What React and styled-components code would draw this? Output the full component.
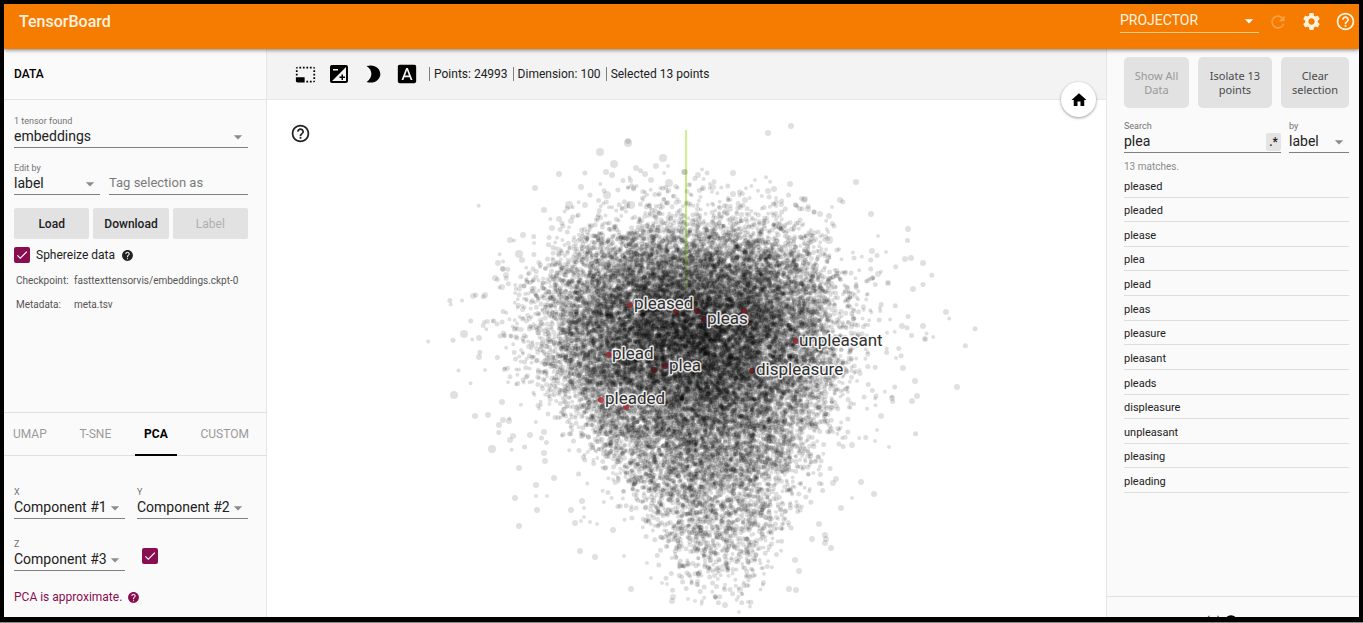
import React, { useId } from "react";
import styled, { createGlobalStyle, css } from "styled-components";
import {
  MdArrowDropDown,
  MdCheck,
  MdExposure,
  MdFontDownload,
  MdHelp,
  MdHelpOutline,
  MdHome,
  MdPhotoSizeSelectSmall,
  MdRefresh,
  MdSettings,
} from "react-icons/md";

const GlobalStyle = createGlobalStyle`
  *, *::before, *::after { box-sizing: border-box; }
  body {
    margin: 0;
    background: #8a8a8a;
    font-family: Roboto, "Liberation Sans", sans-serif;
    color: #212121;
  }
  button, input, select { font: inherit; color: inherit; margin: 0; }
  button { cursor: pointer; }
`;

const Frame = styled.div`
  display: flex;
  flex-direction: column;
  height: calc(100vh - 1px);
  border: 4px solid #000;
  border-bottom-width: 5px;
  overflow: hidden;
  background: #fff;
`;

/* ---------- header ---------- */

const Header = styled.header`
  display: flex;
  align-items: center;
  flex: none;
  height: 45px;
  padding: 0 3px 10px 15px;
  background: #f57c00;
  color: #fff3e0;
  box-shadow: 0 1px 4px rgba(0, 0, 0, 0.5);
  z-index: 2;
`;

const Brand = styled.h1`
  flex: 1;
  margin: 0;
  font-size: 16px;
  line-height: 20px;
  font-weight: 500;
`;

const HeaderActions = styled.div`
  display: flex;
  align-items: center;
  gap: 13px;
  margin-left: 9px;
`;

const IconButton = styled.button`
  display: flex;
  align-items: center;
  justify-content: center;
  padding: 0;
  border: 0;
  background: none;
  font-size: ${(p) => p.$size || 24}px;
  opacity: ${(p) => (p.disabled ? 0.3 : 1)};
`;

/* ---------- form parts ---------- */

const Field = styled.div`
  display: flex;
  flex-direction: column;
  justify-content: flex-end;
  min-width: 0;
  flex: ${(p) => (p.$width ? `0 0 ${p.$width}px` : "1 1 0")};
`;

const FieldLabel = styled.label`
  font-size: 9px;
  line-height: 12px;
  color: #737373;
`;

const Control = styled.div`
  display: grid;
  grid-template-columns: 1fr auto;
  align-items: center;
  height: ${(p) => (p.$header ? 22 : 21)}px;
  border-bottom: 1px solid ${(p) => (p.$header ? "#fbc890" : "#808080")};
`;

const controlText = css`
  width: 100%;
  min-width: 0;
  padding: 0 0 2px;
  border: 0;
  outline: 0;
  background: none;
  line-height: 18px;
`;

const Select = styled.select`
  ${controlText}
  grid-area: 1 / 1 / 2 / 3;
  appearance: none;
  font-size: 14px;
`;

const Arrow = styled(MdArrowDropDown)`
  grid-area: 1 / 2;
  pointer-events: none;
  font-size: 20px;
  color: ${(p) => p.color || "#8c8c8c"};
`;

const TextInput = styled.input`
  ${controlText}
  font-size: ${(p) => p.$size || 14}px;
  &::placeholder { color: #7a7a7a; opacity: 1; }
`;

const TickArea = styled.span`
  display: inline-grid;
  place-items: center;
  width: 16px;
  height: 16px;
  color: #fff;
  font-size: 14px;
  > * { grid-area: 1 / 1; }
  svg { pointer-events: none; }
`;

const Tick = styled.input`
  appearance: none;
  width: 16px;
  height: 16px;
  border-radius: 2px;
  background: #880e4f;
`;

function SelectField({ label, value, width }) {
  const id = useId();
  return (
    <Field $width={width}>
      <FieldLabel htmlFor={id}>{label}</FieldLabel>
      <Control>
        <Select id={id} defaultValue={value}>
          <option>{value}</option>
        </Select>
        <Arrow />
      </Control>
    </Field>
  );
}

function CheckBox(props) {
  return (
    <TickArea>
      <Tick type="checkbox" defaultChecked {...props} />
      <MdCheck />
    </TickArea>
  );
}

function MoonIcon() {
  return (
    <svg width="1em" height="1em" viewBox="0 0 24 24" fill="currentColor" aria-hidden="true">
      <path d="M5 3.4C13 .6 20 5.6 20 12S13 23.4 5 20.6C12 16.4 12 7.6 5 3.4Z" />
    </svg>
  );
}

/* ---------- panels ---------- */

const Body = styled.div`
  display: flex;
  flex: 1;
  min-height: 0;
`;

const SidePanel = styled.aside`
  display: flex;
  flex-direction: column;
  flex: 0 0 ${(p) => p.$width}px;
  background: #fafafa;
  border: 0 solid #e6e6e6;
  border-${(p) => p.$edge}-width: 1px;
`;

const PanelTitle = styled.h2`
  flex: none;
  margin: 0;
  padding: 15px 10px;
  border-bottom: 1px solid #e4e4e4;
  font-size: 12px;
  line-height: 20px;
  font-weight: 500;
  color: #000;
`;

const DataSection = styled.section`
  flex: 1;
  padding: 15px 18px 0 10px;
`;

const FieldRow = styled.div`
  display: flex;
  align-items: flex-end;
  gap: ${(p) => p.$gap}px;
  margin-top: ${(p) => p.$top || 0}px;
`;

const ButtonRow = styled.div`
  display: flex;
  gap: 4px;
  margin-top: 13px;
`;

const GreyButton = styled.button`
  flex: 1 1 0;
  height: 31px;
  padding: 0;
  border: 0;
  border-radius: 2px;
  background: #e2e2e2;
  font-size: 12px;
  font-weight: ${(p) => (p.disabled ? 400 : 500)};
  color: ${(p) => (p.disabled ? "#b0b0b0" : "#212121")};
`;

const CheckLine = styled.div`
  display: flex;
  align-items: center;
  gap: 6px;
  height: 16px;
  margin-top: 8px;
  font-size: 12px;
  label { display: flex; align-items: center; gap: 6px; }
`;

const MetaList = styled.dl`
  display: grid;
  grid-template-columns: 58px 1fr;
  row-gap: 8px;
  margin: 10px 0 0;
  padding-left: 2px;
  font-size: 10px;
  line-height: 16px;
  color: #555;
  white-space: nowrap;
  dd { margin: 0; }
`;

const TabBar = styled.div`
  display: flex;
  justify-content: space-between;
  height: 44px;
  padding-right: 8px;
  border: 1px solid #e0e0e0;
  border-width: 1px 0;
`;

const Tab = styled.button`
  height: 43px;
  padding: 0 9px;
  border: 0;
  border-bottom: 2px solid ${(p) => (p.$active ? "#000" : "transparent")};
  background: none;
  font-size: 12px;
  font-weight: ${(p) => (p.$active ? 700 : 400)};
  color: ${(p) => (p.$active ? "#000" : "#9a9a9a")};
`;

const ComponentSection = styled.div`
  padding: 30px 18px 10px 10px;
`;

const TickSlot = styled.div`
  display: flex;
  flex: 1 1 0;
  > * { margin: 0 0 7px 5px; }
`;

const Notice = styled.p`
  display: flex;
  align-items: center;
  gap: 5px;
  margin: 16px 0 0;
  font-size: 12px;
  line-height: 20px;
  color: #880e4f;
`;

/* ---------- plot ---------- */

const Main = styled.main`
  position: relative;
  display: flex;
  flex-direction: column;
  flex: 1;
  min-width: 0;
`;

const Toolbar = styled.div`
  display: flex;
  align-items: center;
  flex: none;
  height: 51px;
  padding-left: 26px;
  border-bottom: 1px solid #e8e8e8;
  background: #f3f3f3;
  color: #000;
`;

const ToolGroup = styled.div`
  display: flex;
  gap: 10px;
  margin-right: 10px;
  button { width: 24px; }
`;

const Stat = styled.span`
  padding: 0 5px 0 4px;
  border-left: 1px solid #808080;
  font-size: 12px;
  line-height: 14px;
  color: #212121;
  white-space: nowrap;
`;

const PlotHelp = styled(IconButton)`
  position: absolute;
  left: 23px;
  top: 74px;
`;

const HomeButton = styled(IconButton)`
  position: absolute;
  right: 10px;
  top: 33px;
  width: 35px;
  height: 35px;
  border-radius: 50%;
  background: #fff;
  color: #000;
  box-shadow: 0 1px 3px rgba(0, 0, 0, 0.4);
`;

const Plot = styled.svg`
  display: block;
  flex: 1;
  width: 100%;
  min-height: 0;
`;

const PointLabel = styled.text`
  font-size: 17px;
  fill: #303030;
  stroke: rgba(255, 255, 255, 0.85);
  stroke-width: 3px;
  stroke-linejoin: round;
  paint-order: stroke;
`;

/* Profile of the cloud, row by row: [y, weight, centre, spread]. */
const PROFILE = [
  [172, 0.004, 692, 80],
  [190, 0.025, 694, 86],
  [205, 0.06, 696, 90],
  [220, 0.13, 696, 94],
  [240, 0.33, 694, 101],
  [260, 0.62, 690, 108],
  [290, 0.96, 690, 115],
  [330, 1.08, 692, 118],
  [370, 0.97, 692, 113],
  [400, 0.78, 696, 103],
  [430, 0.55, 702, 92],
  [460, 0.38, 707, 80],
  [500, 0.2, 712, 64],
  [540, 0.1, 717, 50],
  [580, 0.035, 720, 36],
  [606, 0.002, 722, 26],
];

/* The densest part, in the middle of the cloud. */
const CORE = { x: 695, y: 335, spreadX: 62, spreadY: 46, share: 0.16 };

/* Isolated points around the cloud: [x, y, radius]. */
const OUTLIERS = [
  [535, 188, 3], [559, 174, 3], [581, 187, 3], [600, 152, 4], [628, 143, 4], [628, 141, 3], [614, 164, 4], [606, 172, 3],
  [612, 175, 3], [636, 168, 3], [645, 174, 3], [656, 166, 3], [663, 158, 4], [668, 166, 2], [651, 180, 3], [685, 172, 3],
  [684, 172, 3], [698, 175, 3], [669, 183, 4], [607, 195, 4], [631, 205, 4], [569, 205, 4], [544, 210, 3], [585, 205, 3],
  [559, 219, 3], [552, 228, 3], [571, 221, 3], [510, 240, 3], [523, 235, 3], [534, 243, 2], [498, 263, 3], [503, 269, 3],
  [495, 278, 3], [506, 275, 3], [502, 287, 3], [485, 295, 3], [473, 296, 3], [464, 334, 4], [479, 338, 3], [484, 322, 2],
  [519, 254, 4], [522, 260, 3], [768, 133, 3], [791, 126, 3], [733, 173, 3], [755, 180, 2], [790, 184, 3], [774, 189, 3],
  [768, 191, 3], [776, 198, 2], [805, 199, 3], [804, 200, 3], [856, 182, 3], [840, 200, 3], [832, 207, 2], [871, 214, 3],
  [829, 216, 3], [820, 214, 3], [808, 209, 3], [908, 229, 3], [878, 236, 2], [872, 251, 3], [886, 252, 2], [905, 259, 3],
  [911, 258, 3], [923, 263, 3], [913, 289, 3], [888, 283, 3], [888, 283, 2], [946, 312, 3], [923, 326, 3], [925, 339, 3],
  [925, 339, 2], [902, 326, 3], [829, 240, 4], [878, 274, 3], [703, 188, 3], [713, 187, 3], [733, 194, 3], [745, 200, 3],
  [479, 357, 3], [485, 370, 2], [454, 395, 4], [475, 416, 3], [488, 415, 3], [502, 402, 3], [503, 420, 3], [499, 425, 3],
  [509, 421, 3], [513, 436, 3], [510, 440, 3], [492, 449, 4], [519, 468, 3], [544, 453, 3], [530, 435, 3], [544, 432, 3],
  [545, 461, 3], [554, 478, 3], [536, 485, 3], [536, 496, 2], [547, 496, 2], [515, 498, 3], [537, 510, 3], [519, 526, 3],
  [571, 510, 3], [582, 501, 3], [584, 508, 2], [575, 523, 3], [581, 521, 2], [584, 517, 2], [590, 522, 2], [597, 524, 2],
  [580, 551, 3], [595, 557, 3], [613, 530, 3], [624, 556, 2], [647, 563, 2], [631, 589, 3], [651, 578, 2], [662, 583, 2],
  [667, 584, 2], [673, 597, 3], [672, 601, 3], [688, 599, 2], [695, 601, 2], [702, 601, 2], [903, 368, 3], [915, 381, 3],
  [957, 387, 3], [917, 396, 3], [912, 401, 3], [892, 398, 3], [892, 397, 2], [896, 358, 2], [881, 416, 3], [877, 430, 2],
  [875, 441, 2], [889, 447, 2], [852, 445, 3], [861, 482, 3], [874, 494, 3], [852, 498, 2], [841, 508, 3], [836, 479, 3],
  [833, 483, 3], [819, 524, 3], [825, 535, 3], [826, 539, 3], [825, 543, 3], [831, 548, 3], [812, 539, 3], [795, 560, 3],
  [799, 571, 3], [789, 589, 3], [796, 590, 3], [763, 568, 2], [740, 590, 3], [748, 602, 2], [725, 605, 3], [739, 612, 2],
];

const SELECTED = [
  [630, 305, "#8c2226"], [676, 311, "#5c1216"], [697, 311, "#4e1014"], [704, 319, "#4e1014"], [744, 311, "#6e1418"],
  [796, 341, "#93282c"], [609, 355, "#9c2a2c"], [665, 366, "#5c1216"], [654, 370, "#4e1014"], [752, 371, "#5c1418"],
  [601, 400, "#b82c30"], [626, 407, "#b03438"],
];

const LABELS = [
  ["pleased", 634, 309],
  ["pleas", 707, 324],
  ["unpleasant", 799, 346],
  ["plead", 612, 359],
  ["plea", 669, 371],
  ["displeasure", 756, 375],
  ["pleaded", 605, 404],
];

function randomSource(seed) {
  let s = seed;
  return () => {
    s = (s + 0x6d2b79f5) | 0;
    let t = Math.imul(s ^ (s >>> 15), 1 | s);
    t = (t + Math.imul(t ^ (t >>> 7), 61 | t)) ^ t;
    return ((t ^ (t >>> 14)) >>> 0) / 4294967296;
  };
}

function profileAt(y) {
  let i = 0;
  while (i < PROFILE.length - 2 && PROFILE[i + 1][0] < y) i += 1;
  const a = PROFILE[i];
  const b = PROFILE[i + 1];
  const t = (y - a[0]) / (b[0] - a[0]);
  return [1, 2, 3].map((k) => a[k] + (b[k] - a[k]) * t);
}

/* Each layer is one translucent path, so that layers darken where they overlap. */
function buildLayers(count, perLayer) {
  const rand = randomSource(20);
  const normal = () => Math.sqrt(-2 * Math.log(1 - rand())) * Math.cos(2 * Math.PI * rand());

  const samplePoint = () => {
    if (rand() < CORE.share) {
      return [CORE.x + normal() * CORE.spreadX, CORE.y + normal() * CORE.spreadY];
    }
    for (;;) {
      const y = 172 + rand() * 434;
      const [weight, centre, spread] = profileAt(y);
      if (rand() * 1.08 <= weight) {
        const kind = rand();
        let offset = normal() * 0.22 + (rand() * 2 - 1) * 1.12;
        if (kind < 0.3) offset = normal() * 0.56;
        if (kind > 0.93) offset = normal() * 0.76;
        return [centre + spread * offset, y + normal() * 5];
      }
    }
  };

  return Array.from({ length: count }, (_, l) => {
    let d = "";
    for (let n = 0; n < perLayer; n += 1) {
      const [x, y] = samplePoint();
      d += `M${x.toFixed(1)} ${y.toFixed(1)}h0`;
    }
    return { d, width: [4, 4, 5, 5, 4, 5][l % 6] };
  });
}

const LAYERS = buildLayers(106, 225);

function ScatterPlot() {
  return (
    <Plot viewBox="267 100 839 517" role="img" aria-label="Embedding projection">
      <path d="M686 130V290" stroke="#ccf48c" strokeWidth="2" />
      <g fill="none" stroke="#000" strokeOpacity="0.13" strokeLinecap="round">
        {LAYERS.map((layer, i) => (
          <path key={i} d={layer.d} strokeWidth={layer.width} />
        ))}
      </g>
      <g fill="#000" fillOpacity="0.12">
        {OUTLIERS.map(([x, y, r], i) => (
          <circle key={i} cx={x} cy={y} r={r} />
        ))}
      </g>
      <path d="M686 170V270" stroke="#a4e04c" strokeWidth="2" strokeOpacity="0.25" />
      {SELECTED.map(([x, y, fill]) => (
        <circle key={`${x}-${y}`} cx={x} cy={y} r="3" fill={fill} fillOpacity="0.85" />
      ))}
      {LABELS.map(([text, x, y]) => (
        <PointLabel key={text} x={x} y={y}>
          {text}
        </PointLabel>
      ))}
    </Plot>
  );
}

/* ---------- inspector ---------- */

const Inspector = styled.div`
  flex: 1;
  min-height: 0;
  padding: 8px 10px 0 17px;
`;

const ActionRow = styled.div`
  display: flex;
  gap: 9px;
`;

const ActionButton = styled.button`
  flex: ${(p) => p.$grow} 1 0;
  height: 51px;
  padding: 0;
  border: 0;
  border-radius: 5px;
  background: #e2e2e2;
  font-family: "Noto Sans", "Open Sans", sans-serif;
  font-size: 11px;
  line-height: 14px;
  color: ${(p) => (p.disabled ? "#989898" : "#4a4a4a")};
  span { display: block; }
`;

const RegexButton = styled.button`
  width: 15px;
  height: 18px;
  padding: 0;
  border: 0;
  border-radius: 2px;
  background: #e4e4e4;
  font-size: 12px;
  line-height: 18px;
  font-weight: 500;
`;

const MatchCount = styled.p`
  margin: 8px 0 0;
  font-size: 10px;
  line-height: 12px;
  color: #8a8a8a;
`;

const MatchList = styled.ul`
  display: grid;
  grid-auto-rows: 1fr;
  min-height: 320px;
  margin: 0;
  padding: 0;
  list-style: none;
`;

const Match = styled.li`
  display: flex;
  align-items: flex-end;
  padding-bottom: 2px;
  border-bottom: 1px solid #dedede;
  font-size: 11px;
  line-height: 16px;
`;

const Bookmarks = styled.section`
  display: flex;
  align-items: flex-start;
  gap: 3px;
  flex: none;
  height: 21px;
  padding: 17px 17px 0;
  overflow: hidden;
  border-top: 1px solid #e0e0e0;
  font-size: 13px;
  line-height: 16px;
  color: #000;
`;

const MATCHES = [
  "pleased", "pleaded", "please", "plea", "plead", "pleas", "pleasure",
  "pleasant", "pleads", "displeasure", "unpleasant", "pleasing", "pleading",
];

export default function App() {
  return (
    <Frame>
      <GlobalStyle />
      <Header>
        <Brand>TensorBoard</Brand>
        <Field $width={139}>
          <Control $header>
            <Select aria-label="Plugin" defaultValue="PROJECTOR">
              <option>PROJECTOR</option>
            </Select>
            <Arrow color="#fff" />
          </Control>
        </Field>
        <HeaderActions>
          <IconButton $size={20} disabled aria-label="Reload">
            <MdRefresh />
          </IconButton>
          <IconButton $size={21} aria-label="Settings">
            <MdSettings />
          </IconButton>
          <IconButton $size={21} aria-label="Help">
            <MdHelpOutline />
          </IconButton>
        </HeaderActions>
      </Header>
      <Body>
        <SidePanel $width={263} $edge="right">
          <PanelTitle>DATA</PanelTitle>
          <DataSection>
            <SelectField label="1 tensor found" value="embeddings" />
            <FieldRow $gap={9} $top={14}>
              <SelectField label="Edit by" value="label" width={86} />
              <Field>
                <Control>
                  <TextInput $size={13} placeholder="Tag selection as" aria-label="Tag selection as" />
                </Control>
              </Field>
            </FieldRow>
            <ButtonRow>
              <GreyButton>Load</GreyButton>
              <GreyButton>Download</GreyButton>
              <GreyButton disabled>Label</GreyButton>
            </ButtonRow>
            <CheckLine>
              <label>
                <CheckBox />
                Sphereize data
              </label>
              <MdHelp size={13} />
            </CheckLine>
            <MetaList>
              <dt>Checkpoint:</dt>
              <dd>fasttexttensorvis/embeddings.ckpt-0</dd>
              <dt>Metadata:</dt>
              <dd>meta.tsv</dd>
            </MetaList>
          </DataSection>
          <section>
            <TabBar role="tablist">
              <Tab role="tab">UMAP</Tab>
              <Tab role="tab">T-SNE</Tab>
              <Tab role="tab" aria-selected="true" $active>
                PCA
              </Tab>
              <Tab role="tab">CUSTOM</Tab>
            </TabBar>
            <ComponentSection>
              <FieldRow $gap={12}>
                <SelectField label="X" value="Component #1" />
                <SelectField label="Y" value="Component #2" />
              </FieldRow>
              <FieldRow $gap={12} $top={19}>
                <SelectField label="Z" value="Component #3" />
                <TickSlot>
                  <CheckBox aria-label="Use third component" />
                </TickSlot>
              </FieldRow>
              <Notice>
                PCA is approximate. <MdHelp size={13} />
              </Notice>
            </ComponentSection>
          </section>
        </SidePanel>
        <Main>
          <Toolbar>
            <ToolGroup>
              <IconButton $size={21} aria-label="Select by box">
                <MdPhotoSizeSelectSmall />
              </IconButton>
              <IconButton aria-label="Edit exposure">
                <MdExposure />
              </IconButton>
              <IconButton $size={22} aria-label="Night mode">
                <MoonIcon />
              </IconButton>
              <IconButton $size={22} aria-label="3D labels">
                <MdFontDownload />
              </IconButton>
            </ToolGroup>
            <Stat>Points: 24993</Stat>
            <Stat>Dimension: 100</Stat>
            <Stat>Selected 13 points</Stat>
          </Toolbar>
          <ScatterPlot />
          <PlotHelp $size={21} aria-label="Plot help">
            <MdHelpOutline />
          </PlotHelp>
          <HomeButton $size={18} aria-label="Reset view">
            <MdHome />
          </HomeButton>
        </Main>
        <SidePanel $width={253} $edge="left">
          <Inspector>
            <ActionRow>
              <ActionButton $grow={65} disabled>
                <span>Show All</span> <span>Data</span>
              </ActionButton>
              <ActionButton $grow={74}>
                <span>Isolate 13</span> <span>points</span>
              </ActionButton>
              <ActionButton $grow={68}>
                <span>Clear</span> <span>selection</span>
              </ActionButton>
            </ActionRow>
            <FieldRow $gap={8} $top={12}>
              <Field>
                <FieldLabel htmlFor="search">Search</FieldLabel>
                <Control>
                  <TextInput id="search" defaultValue="plea" />
                  <RegexButton aria-label="Regex search">.*</RegexButton>
                </Control>
              </Field>
              <SelectField label="by" value="label" width={60} />
            </FieldRow>
            <MatchCount>13 matches.</MatchCount>
            <MatchList>
              {MATCHES.map((word) => (
                <Match key={word}>{word}</Match>
              ))}
            </MatchList>
          </Inspector>
          <Bookmarks>
            BOOKMARKS (0) <MdHelp size={14} />
          </Bookmarks>
        </SidePanel>
      </Body>
    </Frame>
  );
}
